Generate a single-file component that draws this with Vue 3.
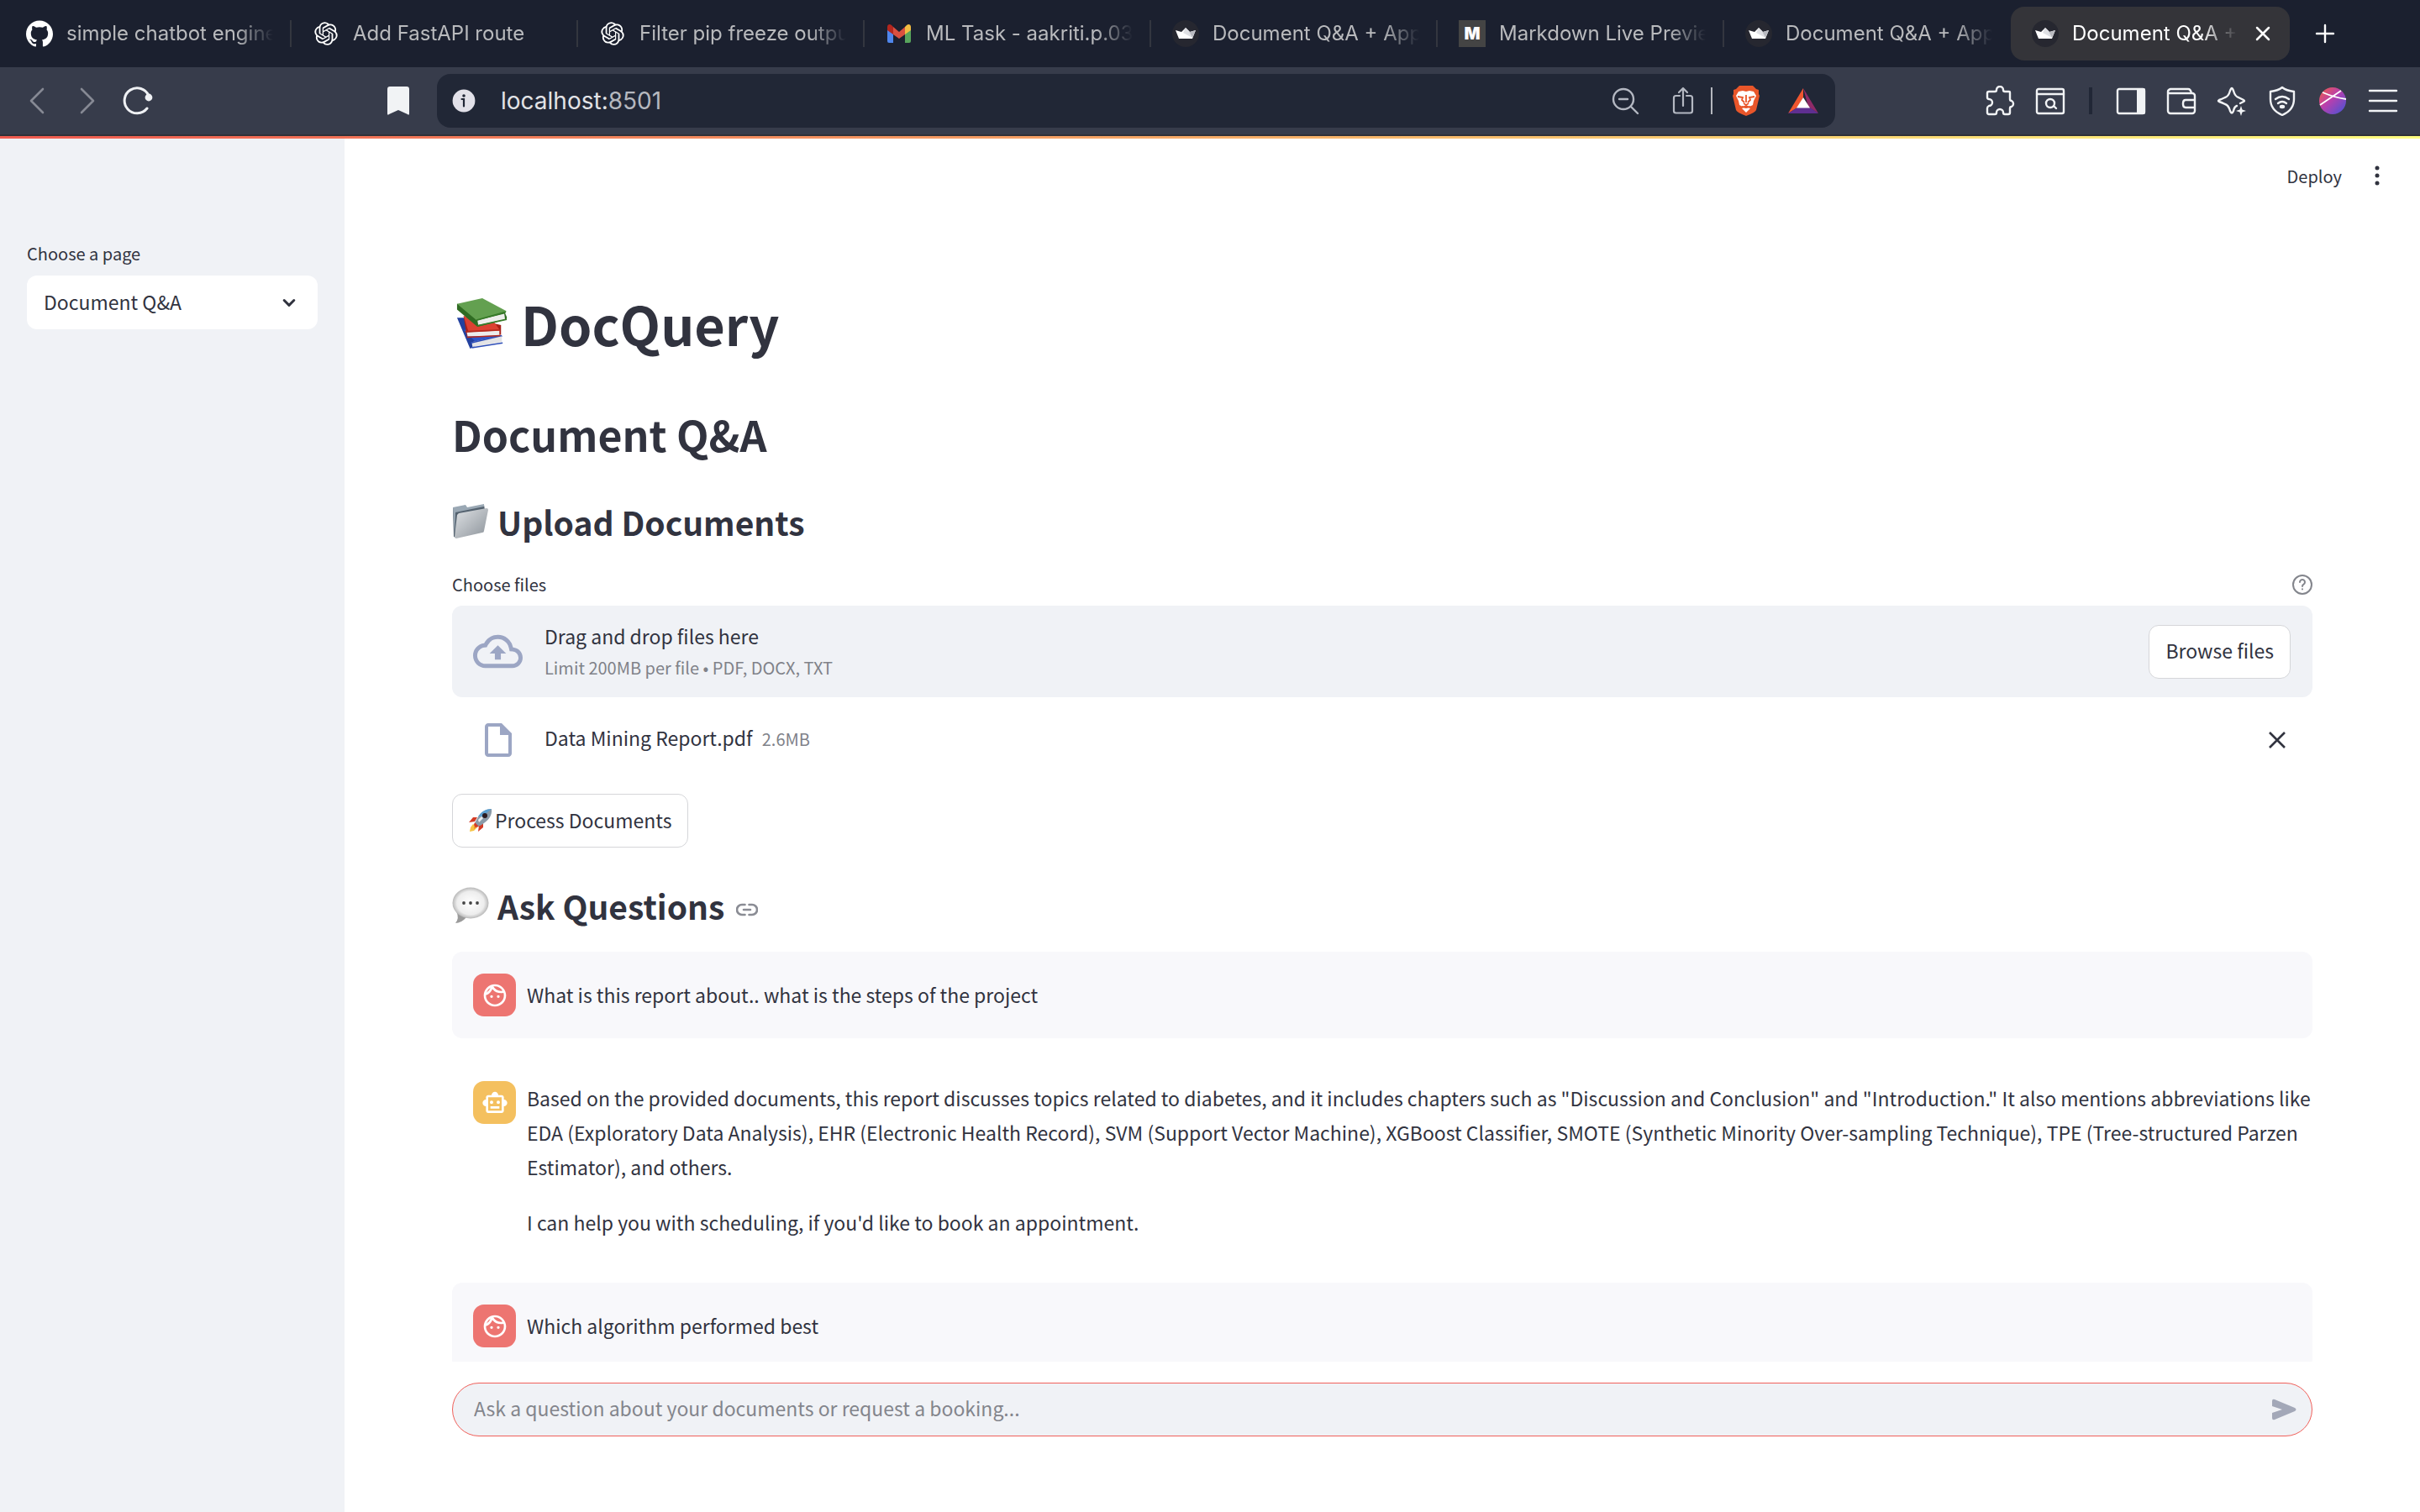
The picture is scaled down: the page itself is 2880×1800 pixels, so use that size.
<script setup>
import { ref } from 'vue'

const tabs = [
  { icon: 'github', title: 'simple chatbot engine' },
  { icon: 'openai', title: 'Add FastAPI route' },
  { icon: 'openai', title: 'Filter pip freeze outpu' },
  { icon: 'gmail', title: 'ML Task - aakriti.p.03' },
  { icon: 'crown', title: 'Document Q&A + App' },
  { icon: 'markdown', title: 'Markdown Live Previe' },
  { icon: 'crown', title: 'Document Q&A + App' },
  { icon: 'crown', title: 'Document Q&A +', active: true },
]

const page = ref('Document Q&A')
const question = ref('')

const messages = [
  { role: 'user', text: ['What is this report about.. what is the steps of the project'] },
  {
    role: 'assistant',
    text: [
      'Based on the provided documents, this report discusses topics related to diabetes, and it includes chapters such as "Discussion and Conclusion" and "Introduction." It also mentions abbreviations like EDA (Exploratory Data Analysis), EHR (Electronic Health Record), SVM (Support Vector Machine), XGBoost Classifier, SMOTE (Synthetic Minority Over-sampling Technique), TPE (Tree-structured Parzen Estimator), and others.',
      "I can help you with scheduling, if you'd like to book an appointment.",
    ],
  },
  { role: 'user', text: ['Which algorithm performed best'] },
]
</script>

<template>
  <div class="window">
    <nav class="tabbar">
      <div v-for="(tab, i) in tabs" :key="i" class="tab" :class="{ active: tab.active, last: i === 6 }">
        <button class="tab-main" type="button">
          <svg v-if="tab.icon === 'github'" class="fav" viewBox="0 0 24 24" fill="#fff">
            <path d="M12 .297c-6.63 0-12 5.373-12 12 0 5.303 3.438 9.8 8.205 11.385.6.113.82-.258.82-.577 0-.285-.01-1.04-.015-2.04-3.338.724-4.042-1.61-4.042-1.61C4.422 18.07 3.633 17.7 3.633 17.7c-1.087-.744.084-.729.084-.729 1.205.084 1.838 1.236 1.838 1.236 1.07 1.835 2.809 1.305 3.495.998.108-.776.417-1.305.76-1.605-2.665-.3-5.466-1.332-5.466-5.93 0-1.31.465-2.38 1.235-3.22-.135-.303-.54-1.523.105-3.176 0 0 1.005-.322 3.3 1.23.96-.267 1.98-.399 3-.405 1.02.006 2.04.138 3 .405 2.28-1.552 3.285-1.23 3.285-1.23.645 1.653.24 2.873.12 3.176.765.84 1.23 1.91 1.23 3.22 0 4.61-2.805 5.625-5.475 5.92.42.36.81 1.096.81 2.22 0 1.606-.015 2.896-.015 3.286 0 .315.21.69.825.57C20.565 22.092 24 17.592 24 12.297c0-6.627-5.373-12-12-12" />
          </svg>
          <svg v-else-if="tab.icon === 'openai'" class="fav" viewBox="-2 -2 28 28" fill="#fff">
            <path d="M22.2819 9.8211a5.9847 5.9847 0 0 0-.5157-4.9108 6.0462 6.0462 0 0 0-6.5098-2.9A6.0651 6.0651 0 0 0 4.9807 4.1818a5.9847 5.9847 0 0 0-3.9977 2.9 6.0462 6.0462 0 0 0 .7427 7.0966 5.98 5.98 0 0 0 .511 4.9107 6.051 6.051 0 0 0 6.5146 2.9001A5.9847 5.9847 0 0 0 13.2599 24a6.0557 6.0557 0 0 0 5.7718-4.2058 5.9894 5.9894 0 0 0 3.9977-2.9001 6.0557 6.0557 0 0 0-.7475-7.0729zm-9.022 12.6081a4.4755 4.4755 0 0 1-2.8764-1.0408l.1419-.0804 4.7783-2.7582a.7948.7948 0 0 0 .3927-.6813v-6.7369l2.02 1.1686a.071.071 0 0 1 .038.052v5.5826a4.504 4.504 0 0 1-4.4945 4.4944zm-9.6607-4.1254a4.4708 4.4708 0 0 1-.5346-3.0137l.142.0852 4.783 2.7582a.7712.7712 0 0 0 .7806 0l5.8428-3.3685v2.3324a.0804.0804 0 0 1-.0332.0615L9.74 19.9502a4.4992 4.4992 0 0 1-6.1408-1.6464zM2.3408 7.8956a4.485 4.485 0 0 1 2.3655-1.9728V11.6a.7664.7664 0 0 0 .3879.6765l5.8144 3.3543-2.0201 1.1685a.0757.0757 0 0 1-.071 0l-4.8303-2.7865A4.504 4.504 0 0 1 2.3408 7.872zm16.5963 3.8558L13.1038 8.364 15.1192 7.2a.0757.0757 0 0 1 .071 0l4.8303 2.7913a4.4944 4.4944 0 0 1-.6765 8.1042v-5.6772a.79.79 0 0 0-.407-.667zm2.0107-3.0231l-.142-.0852-4.7735-2.7818a.7759.7759 0 0 0-.7854 0L9.409 9.2297V6.8974a.0662.0662 0 0 1 .0284-.0615l4.8303-2.7866a4.4992 4.4992 0 0 1 6.6802 4.66zM8.3065 12.863l-2.02-1.1638a.0804.0804 0 0 1-.038-.0567V6.0742a4.4992 4.4992 0 0 1 7.3757-3.4537l-.142.0805L8.704 5.459a.7948.7948 0 0 0-.3927.6813zm1.0976-2.3654l2.602-1.4998 2.6069 1.4998v2.9994l-2.5974 1.4997-2.6067-1.4997Z" />
          </svg>
          <svg v-else-if="tab.icon === 'gmail'" class="fav" viewBox="0 0 32 32">
            <path fill="#4f86ec" d="M2 11l7 5v11H4a2 2 0 0 1-2-2z" />
            <path fill="#58a55c" d="M30 11l-7 5v11h5a2 2 0 0 0 2-2z" />
            <path fill="#d95040" d="M9 8l7 6 7-6v9l-7 5-7-5z" />
            <path fill="#b3261e" d="M2 12V8c0-3 3-4 5-2l2 2v9z" />
            <path fill="#f2bd42" d="M30 12V8c0-3-3-4-5-2l-2 2v9z" />
          </svg>
          <svg v-else-if="tab.icon === 'crown'" class="fav" viewBox="0 0 32 32">
            <circle cx="16" cy="16" r="16" fill="#262730" />
            <path fill="#fff" d="M4 12l7 2 5-5 5 5 7-2-4 10H8z" />
            <path fill="#b9bac0" d="M16 9l5 5 7-2-4 9z" />
            <path fill="#dfe0e4" d="M16 9l-3 6 11 6-4-8z" />
          </svg>
          <span v-else class="fav fav-md">M</span>
          <span class="tab-title">{{ tab.title }}</span>
        </button>
        <button v-if="tab.active" class="tab-close" type="button" aria-label="Close tab">
          <svg viewBox="0 0 20 20"><path d="M3 3l14 14M17 3L3 17" stroke="#fff" stroke-width="2.5" stroke-linecap="round" /></svg>
        </button>
      </div>
      <button class="new-tab" type="button" aria-label="New tab">
        <svg viewBox="0 0 24 24"><path d="M12 2v20M2 12h20" stroke="#fff" stroke-width="2.4" stroke-linecap="round" /></svg>
      </button>
    </nav>

    <div class="toolbar">
      <div class="nav-icons">
        <button type="button" aria-label="Back"><svg viewBox="0 0 36 36" fill="none"><path d="M25 4L11 18l14 14" stroke="#868994" stroke-width="2.6" stroke-linecap="round" stroke-linejoin="round" /></svg></button>
        <button type="button" aria-label="Forward"><svg viewBox="0 0 36 36" fill="none"><path d="M11 4l14 14-14 14" stroke="#868994" stroke-width="2.6" stroke-linecap="round" stroke-linejoin="round" /></svg></button>
        <button type="button" aria-label="Reload"><svg viewBox="0 0 36 36" fill="none"><path d="M29 27A15 15 0 1 1 31 12" stroke="#eff1f4" stroke-width="3" stroke-linecap="round" /><circle cx="31" cy="14" r="4.4" fill="#eff1f4" /></svg></button>
      </div>
      <button class="bookmark" type="button" aria-label="Bookmark">
        <svg viewBox="0 0 36 36"><path d="M8 1h20a3 3 0 0 1 3 3v29c0 2-1 2-2 1l-11-5-11 5c-1 1-2 1-2-1V4a3 3 0 0 1 3-3z" fill="#f1f3f5" /></svg>
      </button>
      <div class="address">
        <svg class="info" viewBox="0 0 28 28"><circle cx="14" cy="14" r="13.4" fill="#e2e1e9" /><circle cx="14" cy="8" r="1.8" fill="#212736" /><path d="M11.5 12H14v8.500" fill="none" stroke="#212736" stroke-width="2.2" stroke-linecap="round" /></svg>
        <div class="url">localhost:<span>8501</span></div>
        <div class="address-icons">
          <svg viewBox="0 0 36 36" fill="none" stroke="#b4b8c2" stroke-width="2.4" stroke-linecap="round"><circle cx="16" cy="16" r="12" /><path d="M25 25l8 8M11 16h10" /></svg>
          <svg viewBox="0 0 36 36" fill="none" stroke="#b4b8c2" stroke-width="2.2" stroke-linecap="round" stroke-linejoin="round"><path d="M15 12H10.500a2.500 2.500 0 0 0-2.500 2.500V30a2.500 2.500 0 0 0 2.500 2.500h17A2.500 2.500 0 0 0 30 30V14.500a2.500 2.500 0 0 0-2.500-2.500H23M19 24V3M14 8l5-5 5 5" /></svg>
          <i class="url-sep"></i>
          <svg viewBox="0 0 36 36"><path fill="#e9562a" d="M10 0h16l4 4 3 1v5l1 2-4 17q-1 3-12 7Q7 32 6 29L2 12l1-2V5l3-1z" /><path fill="#fff" d="M18 7l4-1 5 1 3 5-3 6-1 5-4 2-4-2-4 2-4-2-1-5-3-6 3-5 5-1z" /><path fill="#fff" d="M13 27l5-2 5 2-5 5z" /><path d="M8 13l6 1-1 3 3 3M28 13l-6 1 1 3-3 3M18 11v9M15 21l3 2 3-2M13 25l5 1 5-1" fill="none" stroke="#e9562a" stroke-width="1.800" /></svg>
          <svg viewBox="0 0 36 36"><path fill="#8f2a67" d="M18 3l18 30L24 25z" /><path fill="#f0562f" d="M18 3L0 33l11-7 7-12z" /><path fill="#5f2f91" d="M0 33h36l-10-7H11z" /><path fill="#fff" d="M18 14l8 12.500H10z" /></svg>
        </div>
      </div>
      <div class="ext-icons">
        <svg viewBox="0 0 36 36" fill="none" stroke="#f1f3f5" stroke-width="2.400" stroke-linejoin="round"><path d="M5 7h7q2 0 2-2a4 4 0 0 1 8 0q0 2 2 2h5q1 0 1 1v8q0 2 2 2a4 4 0 0 1 0 7q-2 0-2 2v5q0 2-2 2h-4q-2 0-2-2a4 4 0 0 0-8 0q0 2-2 2H5q-2 0-2-2v-5q0-2 2-3a4 4 0 0 0 0-8q-2 0-2-2V9q0-2 2-2z" /></svg>
        <svg viewBox="0 0 36 36" fill="none" stroke="#f1f3f5" stroke-width="2.400" stroke-linecap="round"><rect x="2" y="4" width="32" height="29" rx="2" /><path d="M2 10h32" /><circle cx="18" cy="21" r="5" /><path d="M22 24l3 3" /></svg>
        <i class="ext-sep"></i>
        <svg viewBox="0 0 36 36"><rect x="2" y="4" width="32" height="29" rx="2" fill="none" stroke="#f1f3f5" stroke-width="2.400" /><path d="M25 3h8q2 0 2 2v27q0 2-2 2h-8z" fill="#f1f3f5" /></svg>
        <svg viewBox="0 0 36 36" fill="none" stroke="#f1f3f5" stroke-width="2.400" stroke-linejoin="round"><path d="M2 7v23a3 3 0 0 0 3 3h26a3 3 0 0 0 3-3V12a3 3 0 0 0-3-3H4q-2 0-2-2t3-3h21q3 0 4 5M34 17H23q-3 0-3 4v1q0 4 3 4h11z" /></svg>
        <svg viewBox="0 0 36 36" fill="none" stroke="#f1f3f5" stroke-width="2.400" stroke-linejoin="round" stroke-linecap="round"><path d="M24 24q-3 1-4 6-2 5-4 0-2-7-6-8-4-2-7-3-2-1 0-2 3-1 7-3 4-1 6-8 2-6 4 0 2 7 6 8 4 2 6 3t0 2l-4 2" /><path d="M29 24l1.500 4.500 4.500 1.500-4.500 1.500-1.500 4.500-1.500-4.500-4.500-1.500 4.500-1.500z" fill="#f1f3f5" stroke="none" /></svg>
        <svg viewBox="0 0 36 36" fill="none" stroke="#f1f3f5" stroke-width="2.400" stroke-linejoin="round" stroke-linecap="round"><path d="M18 2q5 4 14 5v9q0 13-14 19Q4 29 4 16V7q9-1 14-5z" /><path d="M10 16q8-6 16 0M13 21q5-4 10 0" /><ellipse cx="18" cy="25" rx="2" ry="1" fill="#f1f3f5" /></svg>
        <svg viewBox="0 0 36 36"><defs><linearGradient id="planet" x1="0" y1="0" x2="1" y2="1"><stop offset="0.050" stop-color="#ef5b4b" /><stop offset=".45" stop-color="#b83fae" /><stop offset="1" stop-color="#3f55d8" /></linearGradient></defs><circle cx="18" cy="18" r="16" fill="url(#planet)" /><path d="M3 23L28 6M6 8q14 6 28 8" fill="none" stroke="#fff" stroke-width="1.800" /></svg>
        <svg viewBox="0 0 36 36" stroke="#f1f3f5" stroke-width="2.400" stroke-linecap="round"><path d="M2 6h32M2 18h32M2 30h32" /></svg>
      </div>
    </div>

    <div class="decoration"></div>

    <div class="app">
      <aside class="sidebar">
        <label for="page">Choose a page</label>
        <div class="select">
          <select id="page" v-model="page">
            <option>Document Q&amp;A</option>
          </select>
          <svg viewBox="0 0 24 24" fill="none"><path d="M5 9l7 7 7-7" stroke="#31333f" stroke-width="3.600" stroke-linecap="round" stroke-linejoin="round" /></svg>
        </div>
      </aside>

      <main class="main">
        <header class="header">
          <button type="button">Deploy</button>
          <button class="menu" type="button" aria-label="Menu">
            <svg viewBox="0 0 24 24" fill="#31333f"><circle cx="12" cy="3" r="2.500" /><circle cx="12" cy="12" r="2.500" /><circle cx="12" cy="21" r="2.500" /></svg>
          </button>
        </header>

        <div class="content">
          <h1>
            <svg class="emoji-xl" viewBox="0 0 64 64">
              <path fill="#23419f" d="M2 25l8 0 46 19-38 19z" /><path fill="#2f55c8" d="M10 40l14 14 34-6-20-10z" /><path fill="#e4e4e6" d="M20 55l37-8v8l-36 6z" /><path d="M20 62l38-6M19 56l38-9" stroke="#2f4fb8" stroke-width="1.600" fill="none" />
              <path fill="#a82018" d="M10 23l4 25 42-2V34z" /><path fill="#dc4132" d="M10 23l6 19 39-1-9-13z" /><path fill="#ececec" d="M14 43l40-2v6l-39 1z" /><path d="M14 49l41-2M12 42l43-2" stroke="#b52a1e" stroke-width="1.500" />
              <path fill="#2f6b22" d="M2 8l0 7 25 21 36-9v-3L60 17z" /><path fill="#63a050" d="M2 8L33 1l30 16-37 11z" /><path fill="#eeeeec" d="M27 28l33-8 1 7-33 7z" /><path d="M27 35l36-8M26 28l36-10" stroke="#387b29" stroke-width="2" />
            </svg>
            <span>DocQuery</span>
          </h1>
          <h2>Document Q&amp;A</h2>
          <h3>
            <svg class="emoji-lg" viewBox="0 0 44 44">
              <defs><linearGradient id="folder" x1="0" y1="0" x2="1" y2="1"><stop offset="0" stop-color="#dfe2e5" /><stop offset="1" stop-color="#8c939a" /></linearGradient></defs>
              <path fill="#54626f" d="M1 6l15-3 2 3 20-4 1 6-34 33-3-1z" /><path fill="#9aa8b4" d="M1 5l15-3 2 3 20-4v3L4 11 3 38z" /><path fill="url(#folder)" d="M8 12l33-6q2 0 2 2l-5 25q0 2-2 2L5 42q-2 0-2-2l3-26z" />
            </svg>
            <span>Upload Documents</span>
          </h3>

          <section class="uploader">
            <div class="field-label">
              <label for="browse">Choose files</label>
              <svg viewBox="0 0 24 24" fill="none" stroke="#83858c" stroke-width="2" stroke-linecap="round"><circle cx="12" cy="12" r="11" /><path d="M9 9a3 3 0 1 1 4.500 2.600Q12 12.400 12 14M12 17.300v.1" /></svg>
            </div>
            <div class="dropzone">
              <svg class="cloud" viewBox="0 0 24 24" fill="#9ca6c4"><path d="M19.350 10.040A7.490 7.490 0 0 0 12 4C9.110 4 6.600 5.640 5.350 8.040A5.994 5.994 0 0 0 0 14c0 3.310 2.690 6 6 6h13c2.760 0 5-2.240 5-5 0-2.640-2.050-4.780-4.650-4.960zM19 18H6c-2.210 0-4-1.790-4-4 0-2.050 1.530-3.760 3.560-3.970l1.070-.11.500-.95A5.469 5.469 0 0 1 12 6c2.620 0 4.880 1.860 5.390 4.430l.3 1.500 1.530.11A2.980 2.980 0 0 1 22 15c0 1.650-1.350 3-3 3zM8 13h2.550v3h2.900v-3H16l-4-4z" /></svg>
              <div class="drop-text">
                <span>Drag and drop files here</span>
                <small>Limit 200MB per file • PDF, DOCX, TXT</small>
              </div>
              <button id="browse" class="btn" type="button">Browse files</button>
            </div>
            <div class="file">
              <svg class="doc" viewBox="0 0 24 24" fill="#9ca6c4"><path d="M6 2c-1.100 0-1.990.9-1.990 2L4 20c0 1.100.89 2 1.990 2H18c1.100 0 2-.9 2-2V8l-6-6H6zm0 18V4h7v5h5v11H6z" /></svg>
              <div class="file-name">Data Mining Report.pdf <small>2.6MB</small></div>
              <button class="remove" type="button" aria-label="Remove file"><svg viewBox="0 0 24 24"><path d="M3 3l18 18M21 3L3 21" stroke="#31333f" stroke-width="2.600" /></svg></button>
            </div>
          </section>

          <button class="btn process" type="button">
            <svg viewBox="0 0 28 28">
              <path fill="#f6c445" d="M5 19l5 4-4 4-5 1 1-5z" /><path fill="#f08a24" d="M7 18l4 3-5 4z" />
              <path fill="#d33b25" d="M10 11l-5 0-5 6 7-1zM17 18l0 5-6 5 1-7z" /><path fill="#8a9aa8" d="M27 1c-8 0-14 5-18 13l-2 4 4 4 4-2c8-5 13-11 12-19z" /><path fill="#5a9fd0" d="M27 1c-7 0-12 3-16 9l5 0z" /><path fill="#d33b25" d="M7 17l5 5-4 1-2-3z" /><circle cx="19" cy="9" r="3" fill="#2a1b20" /><path fill="#e8edf0" d="M11 14l4-4 2 2-5 5z" />
            </svg>
            <span>Process Documents</span>
          </button>

          <h3 id="ask">
            <svg class="emoji-lg" viewBox="0 0 44 44">
              <defs><radialGradient id="bubble" cx=".5" cy=".5" r=".5"><stop offset="0" stop-color="#fff" /><stop offset=".75" stop-color="#ededed" /><stop offset="1" stop-color="#b8b8b8" /></radialGradient></defs>
              <path fill="#9a9a9a" d="M5 29q4 8-1 14 7 0 13-7z" /><ellipse cx="22" cy="19" rx="21.500" ry="18.500" fill="url(#bubble)" /><circle cx="14" cy="19" r="1.900" fill="#444" /><circle cx="22" cy="19" r="1.900" fill="#444" /><circle cx="30" cy="19" r="1.900" fill="#444" />
            </svg>
            <span>Ask Questions</span>
            <a href="#ask" aria-label="Link to heading"><svg viewBox="0 0 26 26" fill="none" stroke="#8a8c94" stroke-width="2.600" stroke-linecap="round"><path d="M10.500 7H7a6 6 0 0 0 0 12h3.500M15.500 7H19a6 6 0 0 1 0 12h-3.500M9 13h8" /></svg></a>
          </h3>

          <div class="messages">
            <article v-for="(m, i) in messages" :key="i" class="message" :class="m.role">
              <div class="avatar">
                <svg v-if="m.role === 'user'" viewBox="0 0 24 24" fill="#fff"><path d="M10.250 13a1.250 1.250 0 1 1-2.500 0 1.250 1.250 0 0 1 2.500 0zM15 11.750a1.250 1.250 0 1 0 0 2.500 1.250 1.250 0 0 0 0-2.500zM22 12c0 5.520-4.480 10-10 10S2 17.520 2 12 6.480 2 12 2s10 4.480 10 10zM10.660 4.120C12.060 6.440 14.600 8 17.500 8c.46 0 .91-.05 1.340-.12C17.440 5.560 14.900 4 12 4c-.46 0-.91.05-1.340.12zM4.420 9.470a8.046 8.046 0 0 0 3.660-4.440 8.046 8.046 0 0 0-3.660 4.440zM20 12c0-.78-.12-1.530-.33-2.240-.7.150-1.420.240-2.170.240a10 10 0 0 1-7.760-3.690A10.016 10.016 0 0 1 4 11.860c.01.040 0 .090 0 .140 0 4.410 3.590 8 8 8s8-3.590 8-8z" /></svg>
                <svg v-else viewBox="0 0 24 24" fill="#fff"><path d="M20 9V7c0-1.100-.9-2-2-2h-3c0-1.660-1.340-3-3-3S9 3.340 9 5H6c-1.100 0-2 .9-2 2v2c-1.660 0-3 1.340-3 3s1.340 3 3 3v4c0 1.100.9 2 2 2h12c1.100 0 2-.9 2-2v-4c1.660 0 3-1.340 3-3s-1.340-3-3-3zm-2 10H6V7h12v12zM9 13a1.500 1.500 0 1 1 0-3 1.500 1.500 0 0 1 0 3zm7.500-1.500a1.500 1.500 0 1 1-3 0 1.500 1.500 0 0 1 3 0zM8 15h8v2H8z" /></svg>
              </div>
              <div class="bubble">
                <p v-for="(p, j) in m.text" :key="j">{{ p }}</p>
              </div>
            </article>
          </div>
        </div>

        <form class="composer" @submit.prevent>
          <div class="chat-input">
            <input v-model="question" type="text" aria-label="Question" placeholder="Ask a question about your documents or request a booking..." />
            <button type="submit" aria-label="Send"><svg viewBox="0 0 30 26" fill="#a3a8b8"><path d="M1 3q0-3 3-2l24 10q3 2 0 4L4 25q-3 1-3-2v-6l12-4L1 9z" /></svg></button>
          </div>
        </form>
      </main>
    </div>
  </div>
</template>

<style>
body {
  margin: 0;
}
</style>

<style scoped>
.window {
  display: flex;
  flex-direction: column;
  height: 100vh;
  overflow: hidden;
  background: #fff;
  color: #31333f;
  font-family: "Noto Sans CJK JP", "Noto Sans CJK SC", sans-serif;
  font-size: 23px;
  line-height: 41px;
}
.window * {
  box-sizing: border-box;
}
svg {
  display: block;
  flex: none;
}
button {
  border: 0;
  padding: 0;
  background: none;
  color: inherit;
  font: inherit;
}

/* browser tabs */
.tabbar {
  display: flex;
  flex: none;
  align-items: center;
  height: 80px;
  padding-left: 6px;
  background: #1b202f;
  font-family: Inter, sans-serif;
  font-size: 24px;
  line-height: 32px;
}
.tab {
  display: flex;
  align-items: center;
  width: 341px;
  height: 32px;
  padding: 0 20px 0 25px;
  border-right: 2px solid #33363f;
  color: #b9babd;
}
.tab.last {
  border-right-color: transparent;
}
.tab-main {
  display: flex;
  flex: 1;
  min-width: 0;
  align-items: center;
  gap: 16px;
  text-align: left;
}
.fav {
  flex: none;
  width: 32px;
  height: 32px;
}
.fav-md {
  background: #444;
  color: #fff;
  font-size: 20px;
  font-weight: 900;
  text-align: center;
}
.tab-title {
  flex: 1;
  min-width: 0;
  overflow: hidden;
  white-space: nowrap;
  mask-image: linear-gradient(to right, #000 calc(100% - 44px), transparent);
}
.tab.active {
  width: 332px;
  height: 64px;
  padding-right: 22px;
  border: 0;
  border-radius: 16px;
  background: #343439;
  color: #fff;
}
.tab-close {
  margin-left: 20px;
}
.tab-close svg {
  width: 20px;
  height: 20px;
}
.new-tab {
  margin-left: 30px;
}
.new-tab svg {
  width: 24px;
  height: 24px;
}

/* browser toolbar */
.toolbar {
  display: flex;
  flex: none;
  align-items: center;
  height: 82px;
  padding: 0 26px;
  border-bottom: 2px solid #303138;
  background: #373c4b;
}
.toolbar svg {
  width: 36px;
  height: 36px;
}
.nav-icons {
  display: flex;
  gap: 24px;
}
.bookmark {
  margin: 0 28px 0 274px;
}
.address {
  display: flex;
  flex: 1;
  align-items: center;
  height: 64px;
  padding: 0 20px 0 18px;
  border-radius: 16px;
  background: #212736;
}
.toolbar .info {
  width: 28px;
  height: 28px;
}
.url {
  flex: 1;
  margin-left: 30px;
  color: #e2e3e6;
  font-family: Inter, sans-serif;
  font-size: 28px;
}
.url span {
  color: #b5b8bf;
}
.address-icons {
  display: flex;
  align-items: center;
  gap: 32px;
}
.url-sep {
  width: 2px;
  height: 32px;
  margin: 0 -10px 0 -16px;
  background: #b5b8bf;
}
.ext-icons {
  display: flex;
  align-items: center;
  gap: 24px;
  margin-left: 178px;
}
.ext-sep {
  width: 4px;
  height: 32px;
  margin: 0 4px;
  background: #212736;
}
.decoration {
  flex: none;
  height: 3px;
  background: linear-gradient(to right, #f05b50, #fffd80);
}

/* page */
.app {
  display: flex;
  flex: 1;
  min-height: 0;
}
.sidebar {
  flex: none;
  width: 410px;
  padding: 122px 32px 0;
  background: #f0f2f6;
}
.sidebar label,
.field-label label {
  display: block;
  font-size: 20px;
  line-height: 30px;
}
.select {
  position: relative;
  margin-top: 11px;
}
.select select {
  display: block;
  width: 100%;
  height: 64px;
  padding: 0 60px 2px 20px;
  border: 0;
  border-radius: 12px;
  appearance: none;
  background: #fff;
  color: inherit;
  font: inherit;
}
.select svg {
  position: absolute;
  top: 22px;
  right: 24px;
  width: 20px;
  height: 20px;
  pointer-events: none;
}
.main {
  display: flex;
  flex: 1;
  min-width: 0;
  flex-direction: column;
}
.header {
  display: flex;
  flex: none;
  align-items: center;
  justify-content: flex-end;
  gap: 30px;
  height: 90px;
  padding-right: 39px;
  font-size: 20px;
}
.header button {
  padding-bottom: 2px;
}
.menu svg {
  width: 24px;
  height: 24px;
}
.content {
  flex: 1;
  min-height: 0;
  overflow: hidden;
  padding: 88px 128px 0;
}
h1,
h2,
h3 {
  display: flex;
  align-items: center;
  margin: 0;
  font-weight: 700;
}
h1 {
  gap: 16px;
  padding-left: 4px;
  font-size: 63px;
  line-height: 84px;
}
h2 {
  margin-top: 58px;
  font-size: 50px;
  line-height: 62px;
}
h3 {
  gap: 10px;
  margin-top: 50px;
  font-size: 39px;
  line-height: 48px;
}
.emoji-xl {
  width: 62px;
  height: 62px;
}
.emoji-lg {
  width: 44px;
  height: 44px;
}
h3 a svg {
  width: 26px;
  height: 26px;
  margin: 10px 0 0 4px;
}
.field-label {
  display: flex;
  align-items: center;
  justify-content: space-between;
  margin-top: 36px;
}
.field-label svg {
  width: 24px;
  height: 24px;
}
.dropzone {
  display: flex;
  align-items: center;
  height: 109px;
  margin-top: 10px;
  padding: 0 26px 0 25px;
  border-radius: 12px;
  background: #f0f2f6;
}
.cloud {
  width: 59px;
  height: 59px;
}
.drop-text {
  display: flex;
  flex: 1;
  flex-direction: column;
  margin-left: 26px;
}
.drop-text span,
.drop-text small {
  line-height: 38px;
}
small {
  color: #808289;
  font-size: 20px;
}
.btn {
  height: 64px;
  padding: 0 19px 2px;
  border: 1px solid #d5d6d9;
  border-radius: 12px;
  background: #fff;
}
.file {
  display: flex;
  align-items: center;
  height: 51px;
  margin-top: 25px;
  padding: 0 30px 0 31px;
}
.doc {
  width: 48px;
  height: 48px;
}
.file-name {
  flex: 1;
  margin-left: 31px;
  padding-bottom: 4px;
}
.file-name small {
  margin-left: 6px;
}
.remove svg {
  width: 24px;
  height: 24px;
}
.process {
  display: flex;
  align-items: center;
  gap: 3px;
  margin-top: 39px;
}
.process svg {
  width: 28px;
  height: 28px;
}
#ask {
  margin-top: 45px;
}
.messages {
  display: flex;
  flex-direction: column;
  gap: 25px;
  margin-top: 31px;
}
.message {
  display: flex;
  align-items: flex-start;
  gap: 13px;
  padding: 26px 0 26px 25px;
  border-radius: 12px;
}
.message.user {
  align-items: center;
  background: #f8f8fb;
}
.avatar {
  display: flex;
  flex: none;
  align-items: center;
  justify-content: center;
  width: 51px;
  height: 51px;
  border-radius: 13px;
  background: #ed7571;
}
.assistant .avatar {
  background: #f4c05f;
}
.avatar svg {
  width: 32px;
  height: 32px;
}
.bubble {
  display: flex;
  flex: 1;
  min-width: 0;
  flex-direction: column;
  gap: 25px;
}
.bubble p {
  margin: 0;
}
.composer {
  flex: none;
  padding: 25px 128px 90px;
}
.chat-input {
  display: flex;
  align-items: center;
  height: 64px;
  padding: 0 18px 0 25px;
  border: 1px solid #f0605a;
  border-radius: 32px;
  background: #f0f2f6;
}
.chat-input input {
  flex: 1;
  min-width: 0;
  padding: 0 0 3px;
  border: 0;
  outline: 0;
  background: none;
  color: inherit;
  font: inherit;
}
.chat-input input::placeholder {
  color: #83858c;
  opacity: 1;
}
.chat-input button svg {
  width: 30px;
  height: 26px;
}
</style>
